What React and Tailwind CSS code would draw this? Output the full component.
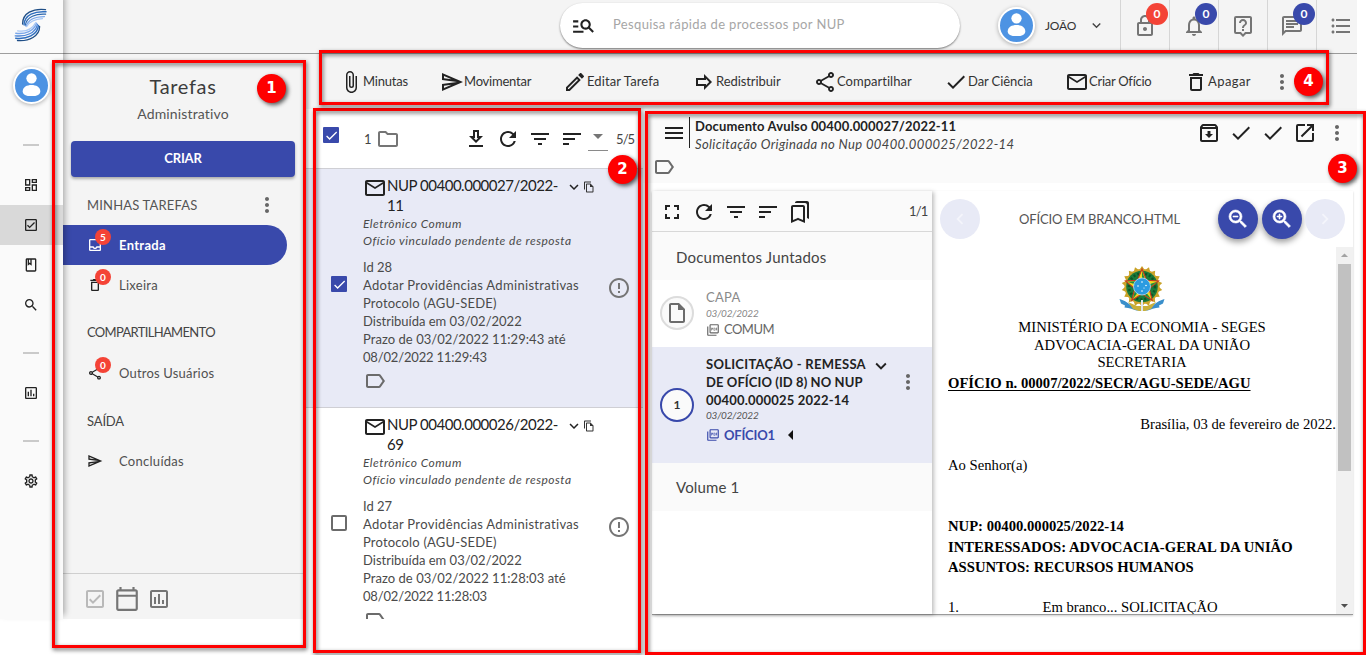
import React from 'react';
import {
  MdOutlineDashboard, MdOutlineCheckBox, MdOutlineClass, MdSearch, MdOutlineAssessment,
  MdOutlineSettings, MdMoreVert, MdOutlineInbox, MdOutlineDelete, MdOutlineShare, MdOutlineSend,
  MdOutlineCalendarToday, MdManageSearch, MdKeyboardArrowDown, MdOutlineLock, MdNotificationsNone,
  MdOutlineLiveHelp, MdOutlineChat, MdFormatListBulleted, MdAttachFile, MdOutlineEdit,
  MdOutlineForward, MdCheck, MdMailOutline, MdOutlineFolder, MdRefresh,
  MdFilterList, MdSort, MdArrowDropDown, MdArrowDropUp, MdOutlineFileCopy, MdErrorOutline,
  MdOutlineLabel, MdMenu, MdOutlineArchive, MdOpenInNew, MdFullscreen, MdOutlineBookmarks,
  MdOutlineInsertDriveFile, MdOutlinePictureAsPdf, MdArrowLeft, MdZoomOut, MdZoomIn,
  MdChevronLeft, MdChevronRight,
} from 'react-icons/md';

function Logo() {
  return (
    <svg width="34" height="34" viewBox="0 0 34 34" fill="none" strokeLinecap="round">
      <path d="M31.500 1.600C19 .2 8.500 5 8.600 16" stroke="#1f4e86" strokeWidth="1.300" />
      <path d="M32 3.800C21 3 10.600 6.500 10 16.800" stroke="#2f6fc0" strokeWidth="1.500" />
      <path d="M31.600 6.200C22 5.600 12.800 8.500 11.200 17.400" stroke="#2b66ad" strokeWidth="1.200" />
      <path d="M30.400 8.600C22 8.600 14.500 11 12 18.200" stroke="#7aa7ea" strokeWidth="1.400" />
      <path d="M28.500 10.600C21 11 15.500 13.500 12.600 18.600" stroke="#a9c8f5" strokeWidth="1.200" />
      <path d="M3.500 32.500C15 33.600 25.800 28 25.600 18.500" stroke="#1f4e86" strokeWidth="1.300" />
      <path d="M1.700 30.200C12.500 31.400 23.800 27 24.400 17.500" stroke="#2f6fc0" strokeWidth="1.500" />
      <path d="M1.200 27.800C12 29 21.800 25 23.400 16.300" stroke="#4f86d6" strokeWidth="1.300" />
      <path d="M1.800 25.300C11.500 26.500 20 22.800 22.600 15.300" stroke="#7aa7ea" strokeWidth="1.400" />
      <path d="M3.600 22.800C11 24 18 21.300 21.800 14.600" stroke="#a9c8f5" strokeWidth="1.200" />
    </svg>
  );
}

function DownloadIcon({ className }) {
  return (
    <svg width="24" height="24" viewBox="0 0 24 24" fill="currentColor" className={className}>
      <path d="M19 9h-4V3H9v6H5l7 7 7-7zm-8 2V5h2v6h1.170L12 13.170 9.830 11H11zm-6 7h14v2H5v-2z" />
    </svg>
  );
}

function Avatar() {
  return (
    <span className="flex size-[37px] shrink-0 rounded-full border-2 border-white bg-[#4d93e3] shadow-[0_1px_4px_rgba(0,0,0,0.3)]">
      <svg viewBox="0 0 32 32" className="size-full" fill="#fff">
        <circle cx="16" cy="9" r="5" />
        <path d="M7.500 21.500c0-4 4-6 8.500-6s8.500 2 8.500 6c0 3.400-3 4.800-8.500 4.800s-8.500-1.400-8.500-4.800z" />
      </svg>
    </span>
  );
}

function Crest() {
  const leaves = Array.from({ length: 18 }, (_, i) => i * 20);
  return (
    <svg width="46" height="46" viewBox="0 0 46 46">
      {leaves.map((a) => (
        <path key={a} d="M23 0l3.400 5h-6.800z" fill="#c9a227" transform={`rotate(${a} 23 20.5)`} />
      ))}
      <circle cx="23" cy="20.500" r="17.500" fill="#cfa52b" />
      <circle cx="23" cy="20.500" r="15.800" fill="#1b7a39" />
      <circle cx="23" cy="20.500" r="13" fill="none" stroke="#0d5527" strokeWidth="2.500" strokeDasharray="2 2" />
      <path d="M.5 33c6 2 9 4 13 8l9.500 2 9.500-2c4-4 7-6 13-8l-1.500 4.500-4 2 .5 2c-5 .5-9 2-12 3h-11c-3-1-7-2.500-12-3l.5-2-4-2z" fill="#3a8fcb" />
      <path d="M9 36l9 4h10l9-4-5 7-6 2h-6l-6-2z" fill="#c9b03a" />
      <path d="M22 34h2v11h-2z" fill="#dfe6ea" />
      <path d="M23 3l4.500 11.200 12 .8-9.300 7.600 3 11.700-10.200-6.400-10.200 6.400 3-11.700L6.500 15l12-.8z" fill="#f3d91d" stroke="#c8371f" strokeWidth="1.100" />
      <path d="M23 5v15l3.600-5zM38 15.800L23 20.500l6.500 1.800zM32.200 33L23 21v6.500zM13.800 33L23 21l-6.500 1.300zM8 15.800l15 4.700-4-5.500z" fill="#238c3f" />
      <circle cx="23" cy="20.500" r="8.500" fill="#2b9be0" stroke="#b9dcf2" strokeWidth=".8" />
      <g fill="#fff">
        <circle cx="23" cy="16" r=".8" /><circle cx="19" cy="20" r=".8" />
        <circle cx="27" cy="19.500" r=".8" /><circle cx="23" cy="25" r=".8" /><circle cx="25" cy="22" r=".6" />
      </g>
    </svg>
  );
}

function Header() {
  const cells = [
    { Icon: MdOutlineLock, badge: 'bg-[#f44336]' },
    { Icon: MdNotificationsNone, badge: 'bg-[#3949ab]' },
    { Icon: MdOutlineLiveHelp },
    { Icon: MdOutlineChat, badge: 'bg-[#3949ab]' },
    { Icon: MdFormatListBulleted },
  ];
  return (
    <header className="flex h-[54px] shrink-0 border-b border-[#9a9a9a] bg-[#f4f4f4]">
      <div className="mt-[3px] ml-[497px] flex h-[45px] w-[400px] items-center rounded-full bg-white pl-[11px] shadow-[0_1px_2px_rgba(0,0,0,0.5)]">
        <MdManageSearch size={25} className="text-[#222]" />
        <span className="-mt-[1px] ml-[17px] text-[13px] tracking-[0.37px] text-[#a6a6a6]">Pesquisa rápida de processos por NUP</span>
      </div>
      <div className="ml-[38px] flex h-[51px] w-[122px] items-center">
        <Avatar />
        <span className="ml-[10px] w-[31px] text-[12px] tracking-[-0.2px] text-[#333]">JOÃO</span>
        <MdKeyboardArrowDown size={17} className="ml-[12px] text-[#444]" />
      </div>
      {cells.map(({ Icon, badge }, i) => (
        <div key={i} className="relative flex w-[49px] shrink-0 items-center justify-center border-l border-[#d6d6d6] pb-[2px] text-[#757575] last:w-[41px] last:pl-[7px]">
          <Icon size={24} className="shrink-0" />
          {badge && (
            <span className={`absolute top-[3px] left-[25px] flex size-[22px] items-center justify-center rounded-full text-[12px] font-bold text-white ${badge}`}>0</span>
          )}
        </div>
      ))}
    </header>
  );
}

function RailIcon({ Icon, active }) {
  return (
    <div className={`flex h-[40px] items-center justify-center pr-[2px] text-[#222] ${active ? 'bg-[#d9d9d9]' : ''}`}>
      <Icon size={16} />
    </div>
  );
}

function Dash() {
  return <div className="flex h-[40px] items-center justify-center pr-[1px]"><div className="h-[2px] w-[16px] bg-[#cacaca]" /></div>;
}

function Rail() {
  return (
    <nav className="relative z-10 h-[619px] w-[63px] shrink-0 bg-[#fafafa] shadow-[2px_-4px_6px_rgba(0,0,0,0.3)]">
      <div className="flex h-[54px] items-start border-b border-[#9e9e9e] pt-[8px] pl-[14px]"><Logo /></div>
      <div className="flex h-[71px] justify-center pt-[13px] pr-[1px]"><Avatar /></div>
      <Dash />
      <RailIcon Icon={MdOutlineDashboard} />
      <RailIcon Icon={MdOutlineCheckBox} active />
      <RailIcon Icon={MdOutlineClass} />
      <RailIcon Icon={MdSearch} />
      <div className="h-[8px]" />
      <Dash />
      <RailIcon Icon={MdOutlineAssessment} />
      <div className="h-[8px]" />
      <Dash />
      <RailIcon Icon={MdOutlineSettings} />
    </nav>
  );
}

function NavItem({ Icon, label, badge, active, track }) {
  return (
    <div className={`flex h-[40px] w-[224px] items-center pl-[24px] text-[13px] ${active ? 'rounded-r-full bg-[#3949ab] font-bold text-white' : 'text-[#505050]'}`}>
      <span className={`relative ${active ? 'text-white' : 'text-[#222]'}`}>
        <Icon size={16} />
        {badge && (
          <span className="absolute -top-[8px] left-[8px] flex size-[16px] items-center justify-center rounded-full bg-[#f44336] text-[10px] leading-none font-bold text-white">{badge}</span>
        )}
      </span>
      <span className={`mt-[2px] ml-[16px] ${track}`}>{label}</span>
    </div>
  );
}

function Sidebar() {
  return (
    <aside className="flex h-[565px] w-[240px] shrink-0 flex-col bg-[#f4f4f4]">
      <h1 className="mt-[19px] h-[26px] text-center text-[20px] leading-[26px] tracking-[0.66px] text-[#3c3c3c]">Tarefas</h1>
      <p className="mt-[5px] h-[20px] text-center text-[14px] leading-[20px] tracking-[0.15px] text-[#555]">Administrativo</p>
      <button className="mt-[17px] ml-[8px] h-[36px] w-[224px] rounded-[4px] bg-[#3949ab] text-[13px] font-bold tracking-[-0.18px] text-white shadow-[0_2px_3px_rgba(0,0,0,0.3)]">CRIAR</button>
      <div className="mt-[8px] flex h-[40px] items-center pl-[24px] text-[13px] tracking-[0.18px] text-[#555]">
        <span className="mt-[2px] w-[168px]">MINHAS TAREFAS</span>
        <MdMoreVert size={24} className="text-[#666]" />
      </div>
      <NavItem Icon={MdOutlineInbox} label="Entrada" badge="5" active track="tracking-[0.32px]" />
      <NavItem Icon={MdOutlineDelete} label="Lixeira" badge="0" track="tracking-[0.28px]" />
      <div className="flex h-[48px] items-center pt-[8px] pl-[24px] text-[13px] tracking-[-0.67px] text-[#444]">COMPARTILHAMENTO</div>
      <NavItem Icon={MdOutlineShare} label="Outros Usuários" badge="0" track="tracking-[0.19px]" />
      <div className="flex h-[48px] items-center pt-[9px] pl-[24px] text-[13px] tracking-[-0.15px] text-[#444]">SAÍDA</div>
      <NavItem Icon={MdOutlineSend} label="Concluídas" track="tracking-[0.28px]" />
      <div className="mt-auto flex h-[46px] items-center border-t border-[#cfcfcf] pt-[4px] pl-[20px] text-[#757575]">
        <MdOutlineCheckBox size={24} className="text-[#b9b9b9]" />
        <MdOutlineCalendarToday size={26} className="ml-[7px]" />
        <MdOutlineAssessment size={24} className="ml-[7px]" />
      </div>
    </aside>
  );
}

function ActionBar() {
  const actions = [
    { Icon: MdAttachFile, label: 'Minutas', cls: 'w-[45px] tracking-[-0.19px]' },
    { Icon: MdOutlineSend, label: 'Movimentar', cls: 'w-[67px] tracking-[-0.22px]' },
    { Icon: MdOutlineEdit, label: 'Editar Tarefa', cls: 'w-[73px] tracking-[0.1px]' },
    { Icon: MdOutlineForward, label: 'Redistribuir', cls: 'w-[65px] tracking-[-0.08px]' },
    { Icon: MdOutlineShare, label: 'Compartilhar', cls: 'w-[75px] tracking-[0.03px]' },
    { Icon: MdCheck, label: 'Dar Ciência', cls: 'w-[65px] tracking-[-0.09px]' },
    { Icon: MdMailOutline, label: 'Criar Ofício', cls: 'w-[63px] tracking-[-0.25px]' },
    { Icon: MdOutlineDelete, label: 'Apagar', cls: 'w-[30px] tracking-[0.42px]' },
  ];
  return (
    <div className="flex h-[55px] shrink-0 items-center gap-[32px] bg-[#f4f4f4] pl-[36px] text-[13px] text-[#333]">
      {actions.map(({ Icon, label, cls }) => (
        <div key={label} className="flex items-center whitespace-nowrap">
          <Icon size={24} className="shrink-0 text-[#222]" />
          <span className={`mt-px ${cls}`}>{label}</span>
        </div>
      ))}
      <MdMoreVert size={24} className="text-[#666]" />
    </div>
  );
}

function CheckBox({ checked }) {
  return checked ? (
    <span className="flex size-[16px] items-center justify-center rounded-[1px] bg-[#3949ab] text-white"><MdCheck size={15} /></span>
  ) : (
    <span className="block size-[16px] rounded-[2px] border-2 border-[#6b6b6b]" />
  );
}

function Task({ tail, nup, id, time, checked }) {
  return (
    <div className={`flex h-[239px] shrink-0 border-t border-[#cfcfd4] ${checked ? 'bg-[#e8eaf6]' : 'bg-white'}`}>
      <div className="w-[60px] pt-[107px] pl-[28px]"><CheckBox checked={checked} /></div>
      <div className="w-[240px] pt-[7px] text-[13px] leading-[18px] whitespace-nowrap text-[#4a4a4a]">
        <div className="flex h-[39px] text-[15px] leading-[19.500px] text-[#222]">
          <MdMailOutline size={24} className="shrink-0" />
          <div className="w-[178px] tracking-[-0.48px]">
            NUP {nup}-<br />{tail}
          </div>
          <MdKeyboardArrowDown size={18} className="mt-[2px]" />
          <MdOutlineFileCopy size={12} className="mt-[5px] text-[#333]" />
        </div>
        <div className="h-[17px] text-[12px] leading-[17px] tracking-[0.46px] italic">Eletrônico Comum</div>
        <div className="mb-[9px] h-[17px] text-[12px] leading-[17px] tracking-[0.51px] italic">Ofício vinculado pendente de resposta</div>
        <div className="tracking-[-0.03px]">Id {id}</div>
        <div className="tracking-[0.32px]">Adotar Providências Administrativas</div>
        <div className="tracking-[0.18px]">Protocolo (AGU-SEDE)</div>
        <div className="tracking-[0px]">Distribuída em 03/02/2022</div>
        <div className="tracking-[0.05px]">Prazo de 03/02/2022 {time} até</div>
        <div className="tracking-[-0.17px]">08/02/2022 {time}</div>
        <MdOutlineLabel size={24} className="mt-[3px] text-[#6b6b6b]" />
      </div>
      <MdErrorOutline size={24} className="mt-[107px] ml-[4px] text-[#757575]" />
    </div>
  );
}

function TaskList() {
  return (
    <section className="flex h-[510px] w-[340px] shrink-0 flex-col overflow-hidden bg-white">
      <div className="flex h-[59px] shrink-0 items-center text-[#222]">
        <span className="-mt-[7px] ml-[20px]"><CheckBox checked /></span>
        <span className="mt-[2px] ml-[25px] w-[12px] text-[13px] text-[#444]">1</span>
        <MdOutlineFolder size={24} className="text-[#757575]" />
        <DownloadIcon className="ml-[64px]" />
        <MdRefresh size={24} className="ml-[8px]" />
        <MdFilterList size={24} className="ml-[8px]" />
        <MdSort size={24} className="ml-[8px]" />
        <div className="mt-[3px] ml-[4px] flex h-[22px] w-[20px] justify-center border-b border-[#8a8a8a] text-[#757575]"><MdArrowDropDown size={24} className="-mt-[5px] shrink-0" /></div>
        <span className="mt-[2px] ml-[8px] text-[13px] tracking-[-0.9px] text-[#444]">5/5</span>
      </div>
      <Task nup="00400.000027/2022" tail="11" id="28" time="11:29:43" checked />
      <Task nup="00400.000026/2022" tail="69" id="27" time="11:28:03" />
    </section>
  );
}

function DocHeader() {
  return (
    <div className="flex h-[74px] flex-col bg-[#fafafa] pt-[8px]">
      <div className="flex h-[32px] text-[13px] leading-[18px] text-[#222]">
        <MdMenu size={24} className="mt-[4px] ml-[19px]" />
        <div className="ml-[3px] h-[31px] w-[6px] border-l border-[#222]" />
        <div className="w-[490px] whitespace-nowrap">
          <div className="font-bold tracking-[0.16px]">Documento Avulso 00400.000027/2022-11</div>
          <div className="tracking-[0.36px] text-[#444] italic">Solicitação Originada no Nup 00400.000025/2022-14</div>
        </div>
        <div className="mt-[4px] ml-[12px] flex h-[24px] gap-[8px]">
          <MdOutlineArchive size={24} />
          <MdCheck size={24} />
          <MdCheck size={24} />
          <MdOpenInNew size={24} />
          <MdMoreVert size={24} className="text-[#666]" />
        </div>
      </div>
      <MdOutlineLabel size={24} className="mt-[6px] ml-[9px] text-[#6b6b6b]" />
    </div>
  );
}

function DocTree() {
  return (
    <div className="relative z-10 h-[423px] w-[280px] shrink-0 bg-white shadow-[2px_1px_4px_rgba(0,0,0,0.25)]">
      <div className="flex h-[41px] items-center gap-[8px] border-b border-[#d8d8d8] bg-[#fafafa] pt-[2px] pl-[8px] text-[#222]">
        <MdFullscreen size={24} />
        <MdRefresh size={24} />
        <MdFilterList size={24} />
        <MdSort size={24} />
        <MdOutlineBookmarks size={24} />
        <span className="ml-[89px] text-[13px] tracking-[-0.8px] text-[#444]">1/1</span>
      </div>
      <div className="h-[48px] bg-[#fafafa] pl-[24px] text-[15px] leading-[50px] tracking-[0.2px] text-[#444]">Documentos Juntados</div>
      <div className="flex h-[67px]">
        <span className="mt-[16px] ml-[8px] flex size-[34px] items-center justify-center rounded-full border-2 border-[#dcdcdc] bg-[#fafafa] text-[#6b6b6b]"><MdOutlineInsertDriveFile size={24} /></span>
        <div className="ml-[12px] pt-[9px] whitespace-nowrap">
          <div className="h-[17px] text-[13px] leading-[17px] tracking-[0.26px] text-[#8a8a8a]">CAPA</div>
          <div className="h-[14px] text-[10px] leading-[14px] tracking-[-0.23px] text-[#888] italic">03/02/2022</div>
          <div className="flex h-[19px] items-center gap-[4px] text-[13px] tracking-[-0.52px] text-[#666]"><MdOutlinePictureAsPdf size={14} />COMUM</div>
        </div>
      </div>
      <div className="flex h-[116px] bg-[#e8eaf6]">
        <span className="mt-[41px] ml-[8px] flex size-[34px] items-center justify-center rounded-full border-2 border-[#3949ab] bg-[#fafafa] text-[12px] font-bold text-[#333]">1</span>
        <div className="ml-[12px] w-[164px] pt-[8px] text-[13px] leading-[18px] font-bold whitespace-nowrap text-[#222]">
          <div className="tracking-[0.28px]">SOLICITAÇÃO - REMESSA</div>
          <div className="tracking-[0.09px]">DE OFÍCIO (ID 8) NO NUP</div>
          <div className="tracking-[0.2px]">00400.000025 2022-14</div>
          <div className="h-[14px] text-[10px] leading-[13px] font-normal tracking-[-0.23px] text-[#555] italic">03/02/2022</div>
          <div className="flex h-[24px] items-center text-[#3949ab]">
            <MdOutlinePictureAsPdf size={14} className="mr-[4px]" />
            <span className="tracking-[-0.2px]">OFÍCIO1</span>
            <MdArrowLeft size={24} className="ml-[4px] text-[#111]" />
          </div>
        </div>
        <MdKeyboardArrowDown size={22} className="mt-[8px] text-[#222]" />
        <MdMoreVert size={24} className="mt-[23px] ml-[4px] text-[#666]" />
      </div>
      <div className="h-[48px] bg-[#fafafa] pl-[24px] text-[15px] leading-[49px] tracking-[0.15px] text-[#444]">Volume 1</div>
    </div>
  );
}

function RoundButton({ Icon, active, size }) {
  return (
    <span className={`flex size-[40px] shrink-0 items-center justify-center rounded-full ${active ? 'bg-[#3949ab] text-white shadow-[0_3px_6px_rgba(0,0,0,0.4)]' : 'bg-[#e8eaf6] text-[#f4f5fb]'}`}>
      <Icon size={size} className={active ? 'stroke-current [stroke-width:0.6] [&>path[fill=none]]:stroke-none' : ''} />
    </span>
  );
}

function DocViewer() {
  return (
    <div className="flex h-[423px] w-[421px] flex-col overflow-hidden bg-white">
      <div className="flex h-[56px] shrink-0 items-center rounded-tr-[8px] pl-[8px]">
        <RoundButton Icon={MdChevronLeft} size={22} />
        <span className="mt-[2px] ml-[39px] w-[199px] text-[13px] tracking-[-0.13px] text-[#555]">OFÍCIO EM BRANCO.HTML</span>
        <RoundButton Icon={MdZoomOut} active size={24} />
        <span className="w-[4px]" />
        <RoundButton Icon={MdZoomIn} active size={24} />
        <span className="w-[3px]" />
        <RoundButton Icon={MdChevronRight} size={22} />
      </div>
      <div className="flex h-[367px]">
        <article className="flex w-[404px] flex-col overflow-hidden pl-[16px] font-['Liberation_Serif',serif] text-[14.67px] leading-[18px] whitespace-nowrap text-black">
          <div className="mt-[19px] flex h-[52px] shrink-0 justify-center"><Crest /></div>
          <div className="text-center">MINISTÉRIO DA ECONOMIA - SEGES</div>
          <div className="text-center">ADVOCACIA-GERAL DA UNIÃO</div>
          <div className="h-[17px] text-center leading-[17px]">SECRETARIA</div>
          <div className="mt-[3px] font-bold underline underline-offset-2">OFÍCIO n. 00007/2022/SECR/AGU-SEDE/AGU</div>
          <div className="mt-[23px] text-right">Brasília, 03 de fevereiro de 2022.</div>
          <div className="mt-[23px]">Ao Senhor(a)</div>
          <div className="mt-[43px] font-bold">NUP: 00400.000025/2022-14</div>
          <div className="mt-[3px] font-bold">INTERESSADOS: ADVOCACIA-GERAL DA UNIÃO</div>
          <div className="mt-[2px] font-bold">ASSUNTOS: RECURSOS HUMANOS</div>
          <div className="mt-[23px] flex h-[16px] leading-[17px]"><span className="w-[94.500px]">1.</span><span>Em branco... SOLICITAÇÃO</span></div>
        </article>
        <div className="flex w-[17px] flex-col items-center bg-[#f1f1f1] text-[#505050]">
          <MdArrowDropUp size={17} className="shrink-0 text-[#a3a3a3]" />
          <div className="h-[207px] w-[13px] bg-[#c1c1c1]" />
          <MdArrowDropDown size={17} className="mt-auto shrink-0" />
        </div>
      </div>
    </div>
  );
}

function Marker({ n, place }) {
  return (
    <span className={`absolute z-20 flex size-[29px] items-center justify-center rounded-full bg-[#fe0000] font-['DejaVu_Sans',sans-serif] text-[15px] leading-none font-bold text-white shadow-[2px_2px_4px_rgba(0,0,0,0.65)] ${place}`}>{n}</span>
  );
}

function Frame({ place }) {
  return <div className={`absolute z-20 border-[3px] border-[#fe0000] drop-shadow-[1px_2px_2px_rgba(0,0,0,0.6)] ${place}`} />;
}

export default function App() {
  return (
    <div className="relative flex h-[655px] w-[1366px] overflow-hidden bg-white font-['Lato',sans-serif]">
      <Rail />
      <main className="flex h-[619px] w-[1294px] flex-col">
        <Header />
        <div className="flex">
          <Sidebar />
          <div className="flex w-[1054px] flex-col">
            <ActionBar />
            <div className="flex">
              <TaskList />
              <section className="w-[714px]">
                <DocHeader />
                <div className="mt-[8px] ml-[9px] flex w-[701px] border-b border-[#9a9a9a] shadow-[0_1px_2px_rgba(0,0,0,0.2)]">
                  <DocTree />
                  <DocViewer />
                </div>
              </section>
            </div>
          </div>
        </div>
      </main>
      <Frame place="top-[60px] left-[52px] h-[588px] w-[254px]" />
      <Frame place="top-[108px] left-[313px] h-[545px] w-[328px]" />
      <Frame place="top-[50px] left-[319px] h-[55px] w-[1010px]" />
      <Frame place="top-[111px] left-[645px] h-[544px] w-[721px]" />
      <Marker n="1" place="top-[74px] left-[257px]" />
      <Marker n="2" place="top-[155px] left-[608px]" />
      <Marker n="3" place="top-[154px] left-[1328px]" />
      <Marker n="4" place="top-[67px] left-[1294px]" />
    </div>
  );
}
